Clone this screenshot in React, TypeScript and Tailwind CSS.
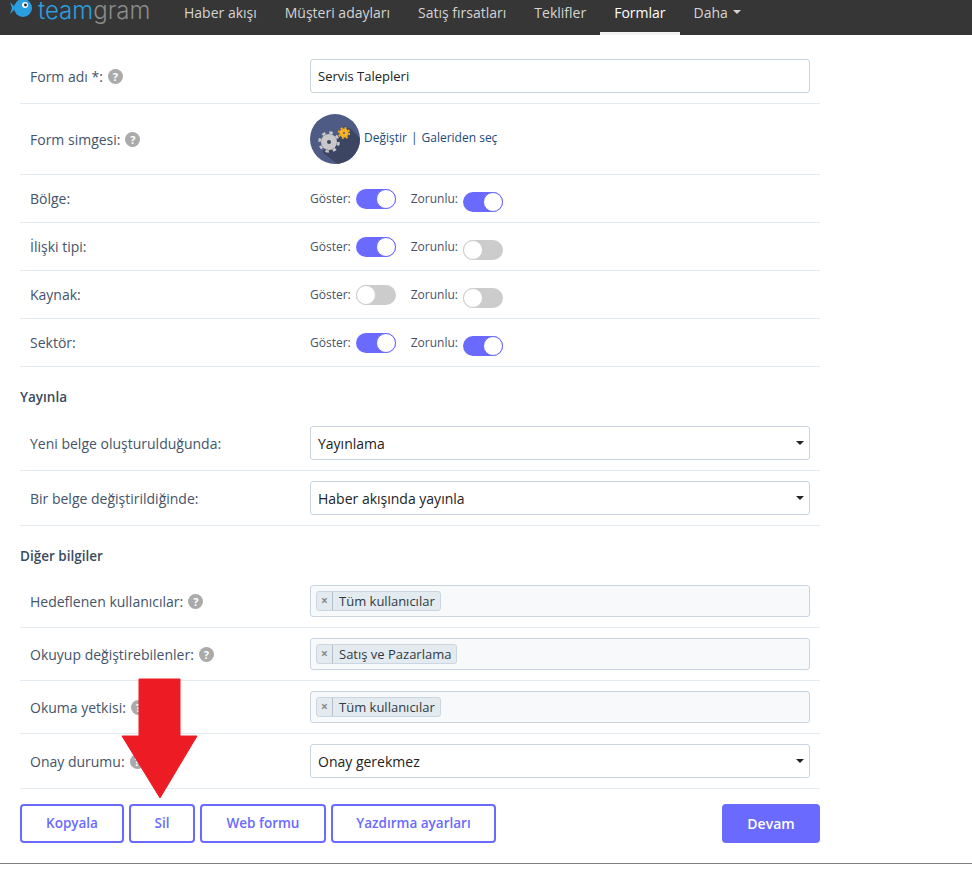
import React from "react";

const navItems = ["Haber akışı", "Müşteri adayları", "Satış fırsatları", "Teklifler", "Formlar"];

function Help({ className = "" }: { className?: string }) {
  return (
    <span className={`inline-flex h-[15px] w-[15px] items-center justify-center rounded-full bg-[#aaaaaa] text-[11px] font-bold leading-none text-white ${className}`}>
      ?
    </span>
  );
}

function Toggle({ on, shift = false }: { on: boolean; shift?: boolean }) {
  return (
    <span
      className={`flex h-[20px] w-[40px] items-center rounded-full ${shift ? "mt-[6px]" : ""} ${
        on ? "justify-end bg-[#6a6aff]" : "justify-start bg-[#cccccc]"
      }`}
    >
      <span className={`h-[20px] w-[20px] rounded-full border bg-white ${on ? "border-[#6a6aff]" : "border-[#cccccc]"}`} />
    </span>
  );
}

function SwitchRow({ label, show, required }: { label: string; show: boolean; required: boolean }) {
  return (
    <div className="flex h-[48px] items-center border-b border-[#e3eaf0] pl-[10px]">
      <div className="w-[280px] text-[14px] text-[#44546a]">{label}</div>
      <div className="flex items-center text-[12px] text-[#44546a]">
        <span className="mr-[5px]">Göster:</span>
        <Toggle on={show} />
        <span className="ml-[15px] mr-[5px]">Zorunlu:</span>
        <Toggle on={required} shift />
      </div>
    </div>
  );
}

function SelectRow({ label, value, help, height, lift = false }: { label: string; value: string; help?: boolean; height: number; lift?: boolean }) {
  return (
    <div className={`flex items-center border-b border-[#e3eaf0] pl-[10px] ${lift ? "pb-[5px]" : ""}`} style={{ height }}>
      <div className="flex w-[280px] items-center gap-[5px] text-[14px] text-[#44546a]">
        {label}
        {help && <Help />}
      </div>
      <div className="flex h-[34px] w-[500px] items-center justify-between rounded-[3px] border border-[#c8d4e0] bg-white pl-[7px] pr-[5px] text-[14px] text-[#222222]">
        {value}
        <span className="h-0 w-0 border-x-[4px] border-t-[4px] border-x-transparent border-t-[#222222]" />
      </div>
    </div>
  );
}

function TagRow({ label, tag }: { label: string; tag: string }) {
  return (
    <div className="flex h-[53px] items-center border-b border-[#e3eaf0] pl-[10px]">
      <div className="flex w-[280px] items-center gap-[5px] text-[14px] text-[#44546a]">
        {label}
        <Help />
      </div>
      <div className="flex h-[32px] w-[500px] items-center rounded-[3px] border border-[#c8d4e0] bg-[#f8f9fa] pl-[5px]">
        <div className="flex h-[20px] items-center rounded-[3px] border border-[#ccd6e0] bg-[#e3eaf0] text-[13px] text-[#303a45]">
          <span className="flex h-full w-[16px] items-center justify-center border-r border-[#b5bfc9] text-[12px] font-bold text-[#888888]">×</span>
          <span className="pl-[6px] pr-[5px] pt-[1px]">{tag}</span>
        </div>
      </div>
    </div>
  );
}

function OutlineButton({ children, width }: { children: React.ReactNode; width: number }) {
  return (
    <button
      className="h-[39px] rounded-[4px] border-2 border-[#6a6aff] bg-white text-[13.5px] font-semibold text-[#6a6aff]"
      style={{ width }}
    >
      {children}
    </button>
  );
}

export default function App() {
  return (
    <div className="relative h-[873px] w-[972px] overflow-hidden bg-white font-['Open_Sans',sans-serif]">
      <header className="flex h-[35px] items-center bg-[#363636]">
        <div className="flex w-[170px] items-center pl-[10px] pb-[14px]">
          <svg width="24" height="20" viewBox="0 0 24 20" className="mr-[4px] -mt-[4px]">
            <circle cx="13" cy="9" r="9" fill="#2a9fe0" />
            <path d="M6 9 L0 3 L2 9 L0 15 Z" fill="#2a9fe0" />
            <circle cx="15" cy="6" r="3" fill="#fff" />
            <circle cx="15.5" cy="6" r="1.4" fill="#222" />
          </svg>
          <span className="font-['Inter',sans-serif] text-[24px] font-light leading-none">
            <span className="text-[#2a9fe0]">team</span>
            <span className="text-[#8a8a8a]">gram</span>
          </span>
        </div>
        <nav className="flex h-full items-stretch text-[14px] text-[#d4d4d4]">
          {navItems.map((item) => (
            <div
              key={item}
              className={
                item === "Formlar"
                  ? "flex items-center border-b-[3px] border-[#f2f2f2] px-[14px] pb-[8px] text-white"
                  : "flex items-center px-[14px] pb-[11px]"
              }
            >
              {item}
            </div>
          ))}
          <div className="ml-[14px] flex items-center gap-[5px] pb-[11px]">
            Daha
            <span className="h-0 w-0 border-x-[4px] border-t-[4px] border-x-transparent border-t-[#d4d4d4]" />
          </div>
        </nav>
      </header>

      <main className="ml-[20px] w-[800px]">
        <div className="flex h-[69px] items-center border-b border-[#e3eaf0] pl-[10px] pt-[14px]">
          <div className="flex w-[280px] items-center gap-[5px] text-[14px] text-[#44546a]">
            Form adı *:
            <Help />
          </div>
          <div className="flex h-[34px] w-[500px] items-center rounded-[3px] border border-[#c8d4e0] pl-[7px] pt-[1px] text-[13px] text-[#222222]">
            Servis Talepleri
          </div>
        </div>

        <div className="flex h-[71px] items-center border-b border-[#e3eaf0] pl-[10px]">
          <div className="flex w-[280px] items-center gap-[5px] text-[14px] text-[#44546a]">
            Form simgesi:
            <Help />
          </div>
          <svg width="50" height="50" viewBox="0 0 50 50">
            <defs>
              <clipPath id="badge">
                <circle cx="25" cy="25" r="25" />
              </clipPath>
            </defs>
            <circle cx="25" cy="25" r="25" fill="#4d5b85" />
            <path d="M12 38 L30 20 L34 12 L41 15 L60 34 L40 60 Z" fill="#3c4663" clipPath="url(#badge)" />
            <circle cx="19" cy="28" r="8" fill="#c8c8c8" />
            <circle cx="19" cy="28" r="9.5" fill="none" stroke="#c8c8c8" strokeWidth="2.5" strokeDasharray="3.5 3.96" />
            <circle cx="19" cy="28" r="2" fill="#3c4663" />
            <circle cx="34" cy="19" r="4.5" fill="#f5b120" />
            <circle cx="34" cy="19" r="5.2" fill="none" stroke="#f5b120" strokeWidth="1.8" strokeDasharray="2 2.08" />
            <circle cx="34" cy="19" r="1" fill="#4d5b85" />
          </svg>
          <div className="ml-[4px] flex items-center pb-[2px] text-[12px] text-[#1c4a78]">
            <span>Değiştir</span>
            <span className="mx-[4px]">|</span>
            <span>Galeriden seç</span>
          </div>
        </div>

        <SwitchRow label="Bölge:" show required />
        <SwitchRow label="İlişki tipi:" show required={false} />
        <SwitchRow label="Kaynak:" show={false} required={false} />
        <SwitchRow label="Sektör:" show required />

        <h3 className="flex h-[54px] items-center pt-[6px] text-[13.5px] font-semibold text-[#3a4a5e]">Yayınla</h3>
        <SelectRow label="Yeni belge oluşturulduğunda:" value="Yayınlama" height={50} lift />
        <SelectRow label="Bir belge değiştirildiğinde:" value="Haber akışında yayınla" height={55} />

        <h3 className="flex h-[49px] items-center pt-[12px] text-[13.5px] font-semibold text-[#3a4a5e]">Diğer bilgiler</h3>
        <TagRow label="Hedeflenen kullanıcılar:" tag="Tüm kullanıcılar" />
        <TagRow label="Okuyup değiştirebilenler:" tag="Satış ve Pazarlama" />
        <TagRow label="Okuma yetkisi:" tag="Tüm kullanıcılar" />
        <SelectRow label="Onay durumu:" value="Onay gerekmez" help height={55} />

        <div className="mt-[15px] flex items-center">
          <div className="flex gap-[5px]">
            <OutlineButton width={104}>Kopyala</OutlineButton>
            <OutlineButton width={66}>Sil</OutlineButton>
            <OutlineButton width={126}>Web formu</OutlineButton>
            <OutlineButton width={165}>Yazdırma ayarları</OutlineButton>
          </div>
          <button className="ml-auto h-[39px] w-[98px] rounded-[4px] bg-[#6a6aff] text-[14px] font-semibold text-white">Devam</button>
        </div>
      </main>

      <div className="absolute left-0 right-0 top-[863px] h-px bg-[#808080]" />

      <svg className="absolute left-[118px] top-[676px]" width="84" height="126" viewBox="0 0 84 126">
        <path d="M21 3 H62 V60 H79 L42 122 L4 60 H21 Z" fill="#ed1c24" stroke="#ed1c24" strokeWidth="1" strokeLinejoin="round" />
      </svg>
    </div>
  );
}
